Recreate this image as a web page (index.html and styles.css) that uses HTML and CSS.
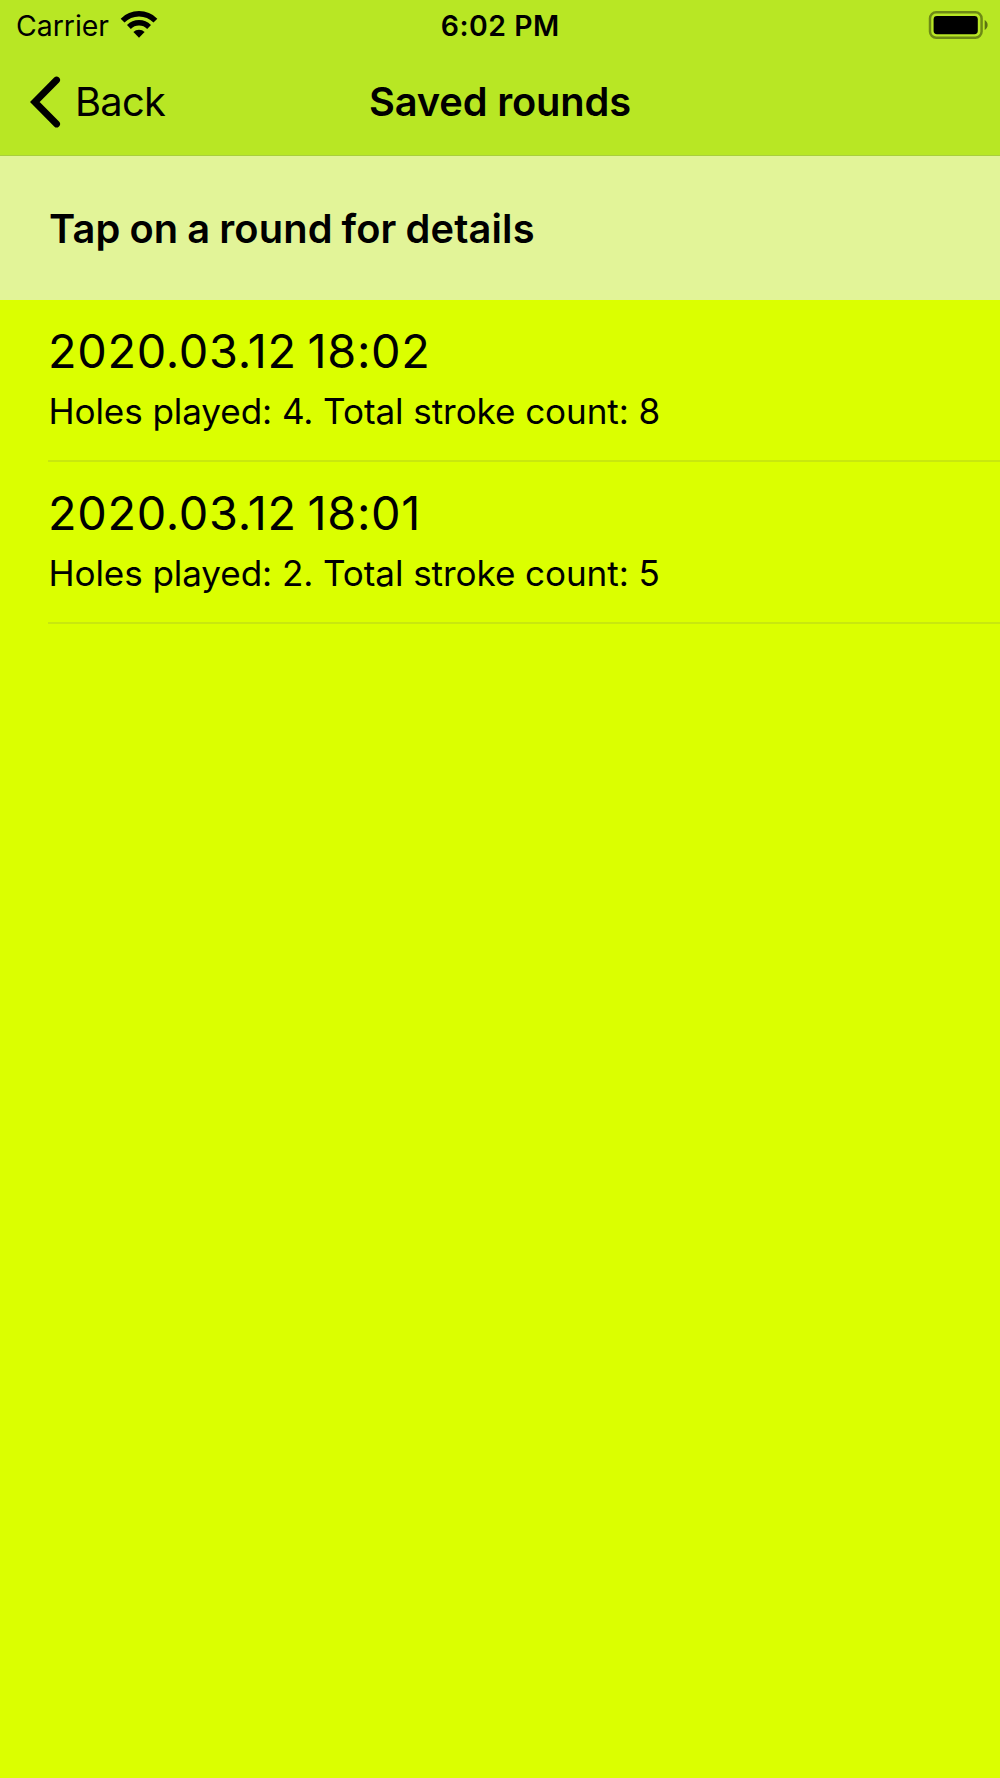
FILE: index.html
```html
<!DOCTYPE html>
<html lang="en">
<head>
<meta charset="utf-8">
<title>Saved rounds</title>
<link rel="stylesheet" href="styles.css">
</head>
<body>
<header class="top">
  <div class="status">
    <div class="status-left">
      <span class="carrier">Carrier</span>
      <svg class="wifi" width="38" height="30" viewBox="0 0 38 30" aria-hidden="true">
        <path d="M2.600 10.600A23.200 23.200 0 0 1 35.400 10.600" fill="none" stroke="#000" stroke-width="5.400"/>
        <path d="M8.900 17A14.300 14.300 0 0 1 29.100 17" fill="none" stroke="#000" stroke-width="5.400"/>
        <path d="M13.400 22A8 8 0 0 1 24.600 22L19 27.800Z"/>
      </svg>
    </div>
    <span class="time">6:02 PM</span>
    <svg class="battery" width="60" height="28" viewBox="0 0 60 28" aria-hidden="true">
      <rect x="2" y="1.3" width="51.6" height="25.4" rx="6.2" fill="none" stroke="#000" stroke-opacity=".4" stroke-width="2.5"/>
      <rect x="5.6" y="5" width="44.2" height="18.2" rx="3.4"/>
      <path d="M56.7 9C60.6 11.200 60.600 16.800 56.700 19Z" fill-opacity=".5"/>
    </svg>
  </div>
  <nav class="nav">
    <a class="back">
      <svg class="chevron" width="31" height="52" viewBox="0 0 31 52" aria-hidden="true">
        <path d="M26.600 4L4.800 26L26.600 48" fill="none" stroke="#000" stroke-width="6.800" stroke-linecap="round" stroke-linejoin="miter"/>
      </svg>
      <span class="back-label">Back</span>
    </a>
    <h1 class="title">Saved rounds</h1>
    <span></span>
  </nav>
</header>
<main>
  <h2 class="hint"><span>Tap on a round for details</span></h2>
  <ul class="rounds">
    <li class="round">
      <div class="date">2020.03.12 18:02</div>
      <div class="summary">Holes played: 4. Total stroke count: 8</div>
    </li>
    <li class="round">
      <div class="date">2020.03.12 18:01</div>
      <div class="summary">Holes played: 2. Total stroke count: 5</div>
    </li>
  </ul>
</main>
</body>
</html>
```
FILE: styles.css
```css
* { box-sizing: border-box; }
body {
  margin: 0;
  min-height: 1778px;
  background: #dbff00;
  color: #000;
  font-family: Inter, "Liberation Sans", sans-serif;
  white-space: nowrap;
}
h1, h2, ul { margin: 0; padding: 0; }
.top {
  height: 156px;
  background: #b8e724;
  border-bottom: 1px solid #a8cf3c;
}
.status {
  display: grid;
  grid-template-columns: 1fr auto 1fr;
  align-items: center;
  height: 48px;
  padding: 0 12.5px 0 16px;
  font-size: 28.4px;
}
.status-left { display: flex; align-items: center; gap: 10.5px; }
.carrier, .time { padding-top: 2px; line-height: 48px; }
.carrier { width: 93px; }
.time {
  font-weight: 600;
  letter-spacing: 0.5px;
  margin-left: -3px;
}
.battery { justify-self: end; }
.nav {
  display: grid;
  grid-template-columns: 1fr auto 1fr;
  align-items: center;
  height: 107px;
  padding: 0 30px;
  font-size: 39.8px;
  line-height: 50px;
}
.back { display: flex; align-items: center; gap: 14px; }
.back-label { letter-spacing: -0.7px; }
.title { font-size: 39.8px; font-weight: 600; letter-spacing: -0.15px; }
.hint {
  display: flex;
  align-items: center;
  height: 144px;
  padding-left: 49px;
  background: #e2f498;
  font-size: 39.8px;
  font-weight: 600;
  letter-spacing: 0.14px;
  word-spacing: -1.2px;
}
.rounds { list-style: none; }
.round {
  height: 162px;
  padding: 23px 0 0 48px;
  background: linear-gradient(#c8e80f, #c8e80f) 48px 100% / 100% 2px no-repeat;
}
.date {
  font-size: 46.8px;
  line-height: 56px;
  letter-spacing: 0.72px;
  word-spacing: -3.2px;
}
.summary {
  margin-top: 10px;
  padding-left: 0.5px;
  font-size: 35.1px;
  line-height: 44px;
  letter-spacing: -0.08px;
}
```
